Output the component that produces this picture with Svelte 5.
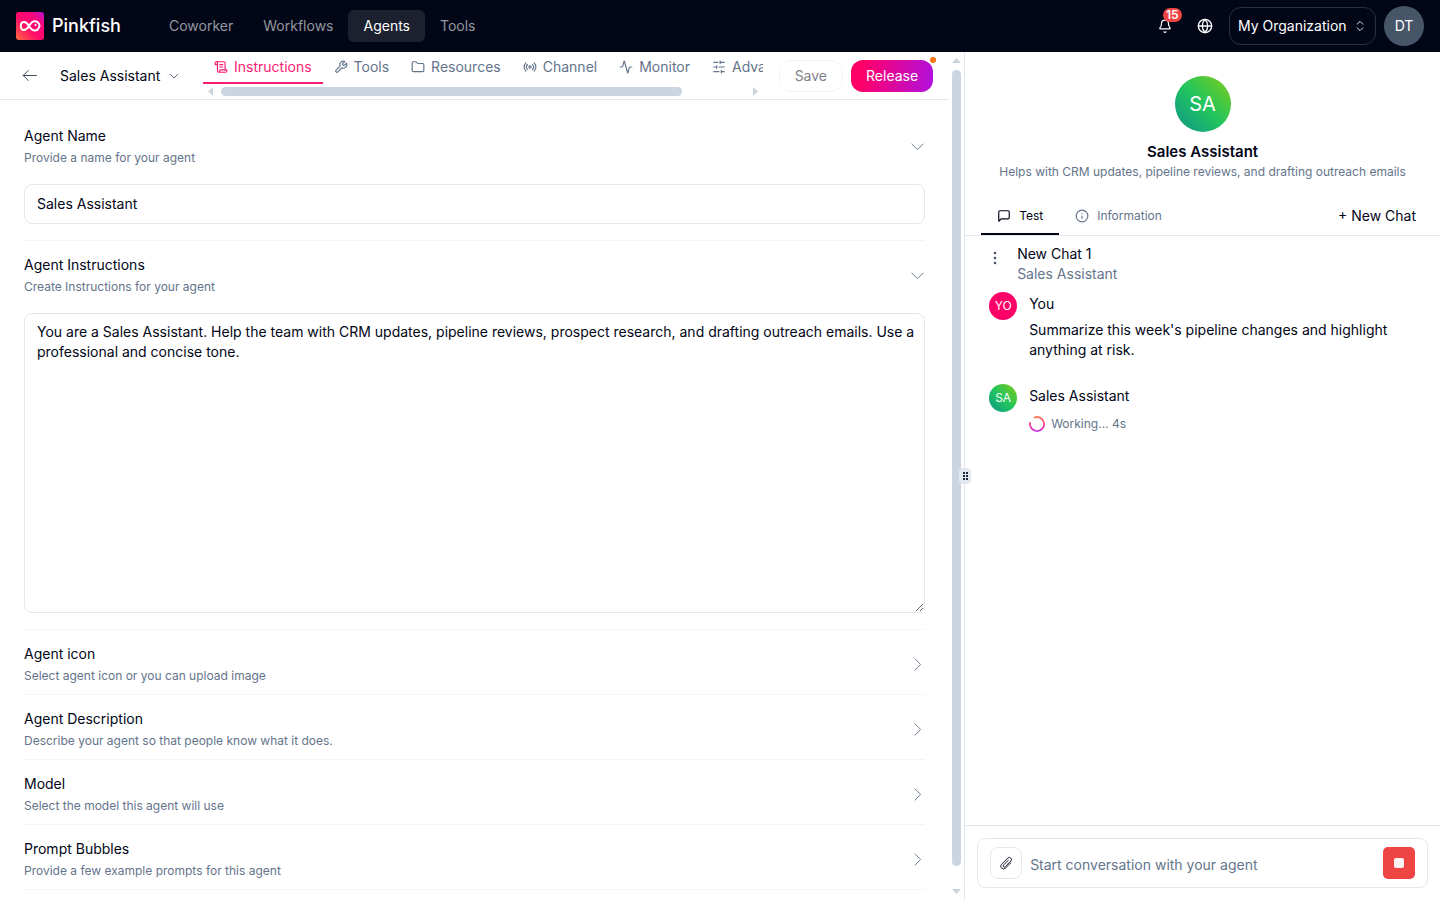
<script>
  const navItems = ['Coworker', 'Workflows', 'Agents', 'Tools'];
  let activeNav = $state('Agents');

  // 24x24 stroke icons
  const icons = {
    scroll: ['M15 12h-5', 'M15 8h-5', 'M19 17V5a2 2 0 0 0-2-2H4', 'M8 21h12a2 2 0 0 0 2-2v-1a1 1 0 0 0-1-1H11a1 1 0 0 0-1 1v1a2 2 0 1 1-4 0V5a2 2 0 1 0-4 0v2a1 1 0 0 0 1 1h3'],
    wrench: ['M14.7 6.3a1 1 0 0 0 0 1.4l1.6 1.6a1 1 0 0 0 1.4 0l3.77-3.77a6 6 0 0 1-7.94 7.94l-6.91 6.91a2.12 2.12 0 0 1-3-3l6.91-6.91a6 6 0 0 1 7.94-7.94l-3.76 3.76z'],
    folder: ['M20 20a2 2 0 0 0 2-2V8a2 2 0 0 0-2-2h-7.9a2 2 0 0 1-1.69-.9L9.6 3.9A2 2 0 0 0 7.93 3H4a2 2 0 0 0-2 2v13a2 2 0 0 0 2 2Z'],
    radio: ['M4.9 19.1C1 15.2 1 8.8 4.9 4.9', 'M7.8 16.2c-2.3-2.3-2.3-6.1 0-8.5', 'M14 12a2 2 0 1 1-4 0a2 2 0 1 1 4 0', 'M16.2 7.8c2.3 2.3 2.3 6.1 0 8.5', 'M19.1 4.9C23 8.8 23 15.1 19.1 19'],
    activity: ['M22 12h-2.48a2 2 0 0 0-1.93 1.46l-2.35 8.36a.25.25 0 0 1-.48 0L9.24 2.18a.25.25 0 0 0-.48 0l-2.35 8.36A2 2 0 0 1 4.49 12H2'],
    sliders: ['M21 4h-7', 'M10 4H3', 'M21 12h-9', 'M8 12H3', 'M21 20h-5', 'M12 20H3', 'M14 2v4', 'M8 10v4', 'M16 18v4'],
    message: ['M21 15a2 2 0 0 1-2 2H7l-4 4V5a2 2 0 0 1 2-2h14a2 2 0 0 1 2 2z'],
    info: ['M22 12a10 10 0 1 1-20 0a10 10 0 1 1 20 0', 'M12 16v-4', 'M12 8h.01'],
    bell: ['M10.3 22a2 2 0 0 0 3.4 0', 'M3.3 15.3A1 1 0 0 0 4 17h16a1 1 0 0 0 .7-1.7C19.4 14 18 12.5 18 8A6 6 0 0 0 6 8c0 4.5-1.4 6-2.7 7.3'],
    globe: ['M22 12a10 10 0 1 1-20 0a10 10 0 1 1 20 0', 'M12 2a14.5 14.5 0 0 0 0 20a14.5 14.5 0 0 0 0-20', 'M2 12h20'],
    upDown: ['m7 15 5 5 5-5', 'm7 9 5-5 5 5'],
    down: ['m3 8 9 9 9-9'],
    right: ['m8 3 9 9-9 9'],
    back: ['M23 12H2', 'M10 4l-8 8 8 8'],
    clip: ['M20.5 11.500l-9.800 9.500a4.600 4.600 0 0 1-6.500-6.500l10.800-11a3.600 3.600 0 0 1 5.200 5.200l-9.700 9.800a2 2 0 0 1-2.900-2.900l8.400-8.600']
  };

  const tabs = [
    { label: 'Instructions', icon: 'scroll' },
    { label: 'Tools', icon: 'wrench' },
    { label: 'Resources', icon: 'folder' },
    { label: 'Channel', icon: 'radio' },
    { label: 'Monitor', icon: 'activity' },
    { label: 'Advanced', icon: 'sliders' }
  ];
  let activeTab = $state('Instructions');

  let name = $state('Sales Assistant');
  let instructions = $state(
    'You are a Sales Assistant. Help the team with CRM updates, pipeline reviews, prospect research, and drafting outreach emails. Use a professional and concise tone.'
  );

  const collapsed = [
    { title: 'Agent icon', hint: 'Select agent icon or you can upload image' },
    { title: 'Agent Description', hint: 'Describe your agent so that people know what it does.' },
    { title: 'Model', hint: 'Select the model this agent will use' },
    { title: 'Prompt Bubbles', hint: 'Provide a few example prompts for this agent' }
  ];

  let draft = $state('');
</script>

{#snippet icon(key, size = 14, weight = 2)}
  <svg width={size} height={size} viewBox="0 0 24 24" fill="none" stroke="currentColor" stroke-width={weight} stroke-linecap="round" stroke-linejoin="round" aria-hidden="true">
    {#each icons[key] as d}
      <path {d} />
    {/each}
  </svg>
{/snippet}

{#snippet arrow(d, w, h)}
  <svg width={w} height={h} viewBox="0 0 {w} {h}" aria-hidden="true"><path {d} fill="#cbd5e1" /></svg>
{/snippet}

{#snippet sectionHead(title, hint, open)}
  <button type="button" class="section-head" aria-expanded={open}>
    <span>
      <span class="section-title">{title}</span>
      <span class="section-hint">{hint}</span>
    </span>
    <span class="chevron">{@render icon(open ? 'down' : 'right', 15, 1.5)}</span>
  </button>
{/snippet}

<div class="app">
  <header class="topbar">
    <a class="brand" href="/">
      <svg width="28" height="28" viewBox="0 0 28 28" aria-hidden="true">
        <defs>
          <linearGradient id="logo" x1="0" y1="1" x2="1" y2="0">
            <stop offset="0" stop-color="#ff6a3d" />
            <stop offset="0.45" stop-color="#ff0a6c" />
            <stop offset="0.75" stop-color="#f5077e" />
            <stop offset="1" stop-color="#b80fd0" />
          </linearGradient>
        </defs>
        <rect width="28" height="28" rx="3" fill="url(#logo)" />
        <path d="M13 14C11.200 11 10 10 8 10C5.800 10 4.800 12 4.800 14S5.800 18 8 18C10 18 11.200 17 13 14S16 9.300 18.800 9.300C21.300 9.300 23 11.500 23.600 13.700C23 16 21.300 18.500 18.800 18.500C16 18.500 14.800 17 13 14Z" fill="none" stroke="#fff" stroke-width="1.900" stroke-linejoin="round" />
        <circle cx="19.500" cy="13" r="1.100" fill="#fff" />
      </svg>
      <span>Pinkfish</span>
    </a>
    <nav>
      {#each navItems as item}
        <button class:active={item === activeNav} onclick={() => (activeNav = item)}>{item}</button>
      {/each}
    </nav>
    <div class="account">
      <button class="icon-btn" aria-label="Notifications">
        {@render icon('bell', 14, 2)}
        <span class="badge">15</span>
      </button>
      <button class="icon-btn" aria-label="Language">{@render icon('globe', 16, 2)}</button>
      <label class="org">
        <select aria-label="Organization">
          <option>My Organization</option>
        </select>
        {@render icon('upDown', 14, 1.5)}
      </label>
      <button class="user">DT</button>
    </div>
  </header>

  <main>
    <section class="editor">
      <div class="editor-body">
        <div class="toolbar">
          <div class="crumb">
            <a href="/agents" aria-label="Back">{@render icon('back', 15, 1.5)}</a>
            <label class="agent-select">
              <select aria-label="Agent">
                <option>Sales Assistant</option>
              </select>
              {@render icon('down', 10, 2)}
            </label>
          </div>
          <div class="tab-scroller">
            <div class="tabs">
              {#each tabs as tab}
                <button class:active={tab.label === activeTab} onclick={() => (activeTab = tab.label)}>
                  {@render icon(tab.icon)}
                  {tab.label}
                </button>
              {/each}
            </div>
            <div class="hscroll">
              {@render arrow('M5 0v9L0 4.5z', 5, 9)}
              <div class="track"><div class="thumb"></div></div>
              {@render arrow('M0 0v9l5-4.5z', 5, 9)}
            </div>
          </div>
          <div class="actions">
            <button class="save" disabled>Save</button>
            <button class="release">Release<span class="dot"></span></button>
          </div>
        </div>

        <form class="sections">
          <div class="section open">
            {@render sectionHead('Agent Name', 'Provide a name for your agent', true)}
            <input type="text" aria-label="Agent Name" bind:value={name} />
          </div>
          <div class="section open">
            {@render sectionHead('Agent Instructions', 'Create Instructions for your agent', true)}
            <textarea aria-label="Agent Instructions" bind:value={instructions}></textarea>
          </div>
          {#each collapsed as item}
            <div class="section">
              {@render sectionHead(item.title, item.hint, false)}
            </div>
          {/each}
        </form>
      </div>
      <div class="vscroll">
        {@render arrow('M0 5h9L4.5 0z', 9, 5)}
        <div class="track"><div class="thumb"></div></div>
        {@render arrow('M0 0h9L4.5 5z', 9, 5)}
      </div>
    </section>

    <aside class="chat">
      <button class="handle" aria-label="Resize panels">
        <svg width="5" height="8" viewBox="0 0 5 8" fill="#1e293b" aria-hidden="true">
          {#each [0, 3, 6] as y}
            <rect x="0" {y} width="2" height="2" />
            <rect x="3" {y} width="2" height="2" />
          {/each}
        </svg>
      </button>

      <div class="profile">
        <div class="avatar large">SA</div>
        <h2>Sales Assistant</h2>
        <p>Helps with CRM updates, pipeline reviews, and drafting outreach emails</p>
      </div>

      <div class="chat-tabs">
        <button class="active">{@render icon('message')}Test</button>
        <button>{@render icon('info')}Information</button>
        <button class="new-chat">+ New Chat</button>
      </div>

      <div class="thread">
        <div class="thread-head">
          <button aria-label="Chat options">
            <svg width="4" height="14" viewBox="0 0 4 14" fill="#475569" aria-hidden="true">
              <circle cx="2" cy="2" r="1.3" /><circle cx="2" cy="7" r="1.3" /><circle cx="2" cy="12" r="1.3" />
            </svg>
          </button>
          <div>
            <div>New Chat 1</div>
            <div class="muted">Sales Assistant</div>
          </div>
        </div>
        <div class="message">
          <div class="avatar you">YO</div>
          <div>
            <div class="author">You</div>
            <p>Summarize this week's pipeline changes and highlight anything at risk.</p>
          </div>
        </div>
        <div class="message">
          <div class="avatar">SA</div>
          <div>
            <div class="author">Sales Assistant</div>
            <div class="working">
              <svg width="16" height="16" viewBox="0 0 16 16" aria-hidden="true">
                <defs>
                  <linearGradient id="spin" x1="0" y1="0" x2="0" y2="1">
                    <stop offset="0" stop-color="#ff7a5c" />
                    <stop offset="0.5" stop-color="#fb3f8f" />
                    <stop offset="1" stop-color="#c838dc" />
                  </linearGradient>
                </defs>
                <path d="M5.500 1.500A7 7 0 1 1 1.100 7" fill="none" stroke="url(#spin)" stroke-width="1.800" stroke-linecap="round" />
              </svg>
              Working… 4s
            </div>
          </div>
        </div>
      </div>

      <div class="composer">
        <div class="composer-box">
          <button class="attach" aria-label="Attach file">{@render icon('clip', 14, 1.5)}</button>
          <input type="text" aria-label="Message" placeholder="Start conversation with your agent" bind:value={draft} />
          <button class="stop" aria-label="Stop"><span></span></button>
        </div>
      </div>
    </aside>
  </main>
</div>

<style>
  :global(body) {
    margin: 0;
    overflow: hidden;
  }

  .app {
    display: flex;
    flex-direction: column;
    height: 100vh;
    background: #fff;
    color: #020617;
    font-family: Inter, "Liberation Sans", sans-serif;
    font-size: 14px;
    line-height: 20px;
  }

  .app * {
    box-sizing: border-box;
  }

  button,
  select,
  input,
  textarea {
    font: inherit;
    color: inherit;
    margin: 0;
    padding: 0;
    border: none;
    background: none;
    outline: none;
  }

  button {
    cursor: pointer;
  }

  select {
    appearance: none;
  }

  a {
    color: inherit;
    text-decoration: none;
  }

  h2,
  p {
    margin: 0;
  }

  svg {
    display: block;
    flex-shrink: 0;
  }

  /* top bar */
  .topbar {
    display: flex;
    align-items: center;
    height: 52px;
    flex-shrink: 0;
    padding: 0 16px;
    background: #020617;
    color: #fff;
  }

  .brand {
    display: flex;
    align-items: center;
    gap: 8px;
    width: 138px;
    font-size: 18px;
    font-weight: 500;
  }

  nav {
    display: flex;
  }

  nav button {
    height: 32px;
    padding: 0 15px;
    border-radius: 6px;
    color: #94979f;
  }

  nav button.active {
    background: #1c202f;
    color: #fff;
  }

  .account {
    display: flex;
    align-items: center;
    gap: 8px;
    margin-left: auto;
  }

  .icon-btn {
    display: grid;
    place-items: center;
    position: relative;
    width: 32px;
    height: 32px;
  }

  .badge {
    position: absolute;
    top: -2px;
    left: 14px;
    padding: 0 3px;
    border-radius: 7px;
    background: #ef4444;
    font-size: 12px;
    font-weight: 600;
    line-height: 14px;
  }

  .org {
    display: flex;
    align-items: center;
    height: 38px;
    padding: 0 8px;
    border: 1px solid #2b3040;
    border-radius: 12px;
  }

  .org select {
    width: 115px;
  }

  .user {
    width: 40px;
    height: 40px;
    border-radius: 50%;
    background: #475569;
  }

  /* panels */
  main {
    display: flex;
    flex: 1;
    min-height: 0;
  }

  .editor {
    display: flex;
    flex: 67 1 0;
    min-width: 0;
  }

  .editor-body {
    display: flex;
    flex-direction: column;
    flex: 1;
    min-width: 0;
    overflow: hidden;
  }

  .toolbar {
    display: flex;
    align-items: center;
    height: 48px;
    flex-shrink: 0;
    padding-right: 16px;
    border-bottom: 1px solid #e2e8f0;
  }

  .crumb {
    display: flex;
    align-items: center;
    gap: 23px;
    flex-shrink: 0;
    width: 203px;
    padding-left: 22px;
    color: #334155;
  }

  .agent-select {
    display: flex;
    align-items: center;
    gap: 8px;
  }

  .agent-select select {
    color: #020617;
  }

  .tab-scroller {
    align-self: stretch;
    flex: 1;
    min-width: 0;
    overflow: hidden;
  }

  .tabs {
    display: flex;
    height: 32px;
  }

  .tabs button {
    display: flex;
    align-items: center;
    gap: 6px;
    flex-shrink: 0;
    padding: 0 11px;
    border-bottom: 2px solid transparent;
    color: #64748b;
  }

  .tabs button.active {
    border-color: #f91c72;
    color: #f91c72;
  }

  .hscroll {
    display: flex;
    align-items: center;
    gap: 8px;
    height: 15px;
    padding: 0 5px;
  }

  .track {
    flex: 1;
  }

  .thumb {
    border-radius: 5px;
    background: #cbd5e1;
  }

  .hscroll .thumb {
    width: 88%;
    height: 9px;
  }

  .vscroll {
    display: flex;
    flex-direction: column;
    align-items: center;
    gap: 7px;
    width: 15px;
    padding: 6px 0;
  }

  .vscroll .thumb {
    width: 9px;
    height: 98%;
  }

  .actions {
    display: flex;
    gap: 8px;
    padding-left: 16px;
  }

  .actions button {
    height: 32px;
    padding: 0 15px;
    border-radius: 12px;
  }

  .save {
    border: 1px solid #f1f5f9;
    color: #808289;
  }

  .release {
    position: relative;
    background: linear-gradient(100deg, #ff0068 15%, #b010e0);
    color: #fff;
  }

  .dot {
    position: absolute;
    top: -3px;
    right: -3px;
    width: 6px;
    height: 6px;
    border-radius: 50%;
    background: #f97316;
  }

  /* form sections */
  .sections {
    padding: 12px 24px 0;
  }

  .section {
    border-bottom: 1px solid #f1f5f9;
  }

  .section.open {
    padding-bottom: 16px;
  }

  .section-head {
    display: flex;
    align-items: center;
    justify-content: space-between;
    width: 100%;
    height: 64px;
    padding-top: 4px;
    text-align: left;
  }

  .section.open .section-head {
    margin-bottom: 8px;
  }

  .section-title,
  .section-hint {
    display: block;
  }

  .section-hint {
    margin-top: 4px;
    color: #64748b;
    font-size: 12px;
    line-height: 16px;
  }

  .chevron {
    color: #64748b;
  }

  .section input,
  .section textarea {
    display: block;
    width: 100%;
    border: 1px solid #e2e8f0;
    border-radius: 8px;
  }

  .section input {
    height: 40px;
    padding: 0 12px 2px;
  }

  .section textarea {
    height: 300px;
    padding: 8px 4px 8px 12px;
    resize: vertical;
  }

  /* chat panel */
  .chat {
    display: flex;
    flex-direction: column;
    position: relative;
    flex: 33 1 0;
    min-width: 0;
    border-left: 1px solid #e2e8f0;
  }

  .handle {
    display: grid;
    place-items: center;
    position: absolute;
    top: 50%;
    left: -6px;
    width: 12px;
    height: 16px;
    margin-top: -8px;
    border-radius: 4px;
    background: #e2e8f0;
  }

  .profile {
    display: flex;
    flex-direction: column;
    align-items: center;
    padding: 24px 16px 16px;
    text-align: center;
  }

  .profile h2 {
    margin-top: 8px;
    font-size: 15px;
    font-weight: 600;
    line-height: 24px;
  }

  .profile p {
    color: #64748b;
    font-size: 12px;
    line-height: 16px;
  }

  .avatar {
    display: grid;
    place-items: center;
    flex-shrink: 0;
    width: 28px;
    height: 28px;
    border-radius: 50%;
    background: linear-gradient(45deg, #0d9488, #22c55e 50%, #84cc16);
    color: #fff;
    font-size: 12px;
  }

  .avatar.large {
    width: 56px;
    height: 56px;
    font-size: 20px;
  }

  .avatar.you {
    background: #ff0068;
  }

  .chat-tabs {
    display: flex;
    height: 40px;
    padding: 0 24px 0 16px;
    border-bottom: 1px solid #e2e8f0;
  }

  .chat-tabs button {
    display: flex;
    align-items: center;
    gap: 8px;
    padding: 2px 16px 0;
    border-bottom: 2px solid transparent;
    color: #64748b;
    font-size: 12px;
  }

  .chat-tabs button.active {
    border-color: #020617;
    color: #020617;
  }

  .chat-tabs button.new-chat {
    margin-left: auto;
    padding: 2px 0 0;
    color: #020617;
    font-size: 14px;
  }

  .thread {
    flex: 1;
    padding: 8px 24px;
  }

  .thread-head {
    display: flex;
    gap: 20px;
    margin-bottom: 8px;
  }

  .thread-head button {
    height: 28px;
    padding-left: 4px;
  }

  .muted {
    color: #64748b;
  }

  .message {
    display: flex;
    gap: 12px;
    margin-bottom: 24px;
  }

  .author {
    padding: 2px 0 6px;
  }

  .working {
    display: flex;
    align-items: center;
    gap: 6px;
    padding-top: 2px;
    color: #64748b;
    font-size: 12px;
  }

  .composer {
    padding: 12px;
    border-top: 1px solid #e2e8f0;
  }

  .composer-box {
    display: flex;
    align-items: flex-end;
    gap: 8px;
    padding: 8px 12px;
    border: 1px solid #e2e8f0;
    border-radius: 8px;
  }

  .composer-box input {
    flex: 1;
    min-width: 0;
    height: 30px;
  }

  .composer-box input::placeholder {
    color: #64748b;
  }

  .composer-box button {
    display: grid;
    place-items: center;
    width: 32px;
    height: 32px;
    border-radius: 8px;
  }

  .composer-box .attach {
    border: 1px solid #e2e8f0;
  }

  .composer-box .stop {
    border-radius: 5px;
    background: #ef4444;
  }

  .stop span {
    width: 10px;
    height: 10px;
    border-radius: 2px;
    background: #fef2f2;
  }
</style>
